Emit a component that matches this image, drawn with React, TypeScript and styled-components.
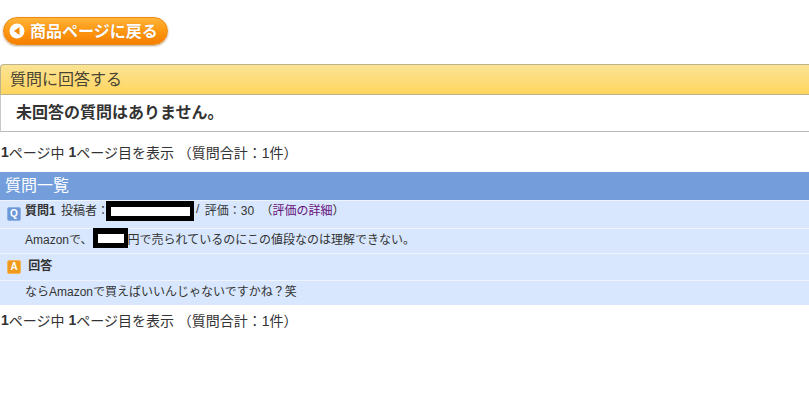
import React from "react";
import styled, { createGlobalStyle } from "styled-components";

const Global = createGlobalStyle`
  html, body { margin: 0; padding: 0; background: #fff; }
  body { font-family: "Liberation Sans", "Noto Sans CJK JP", sans-serif; color: #333; }
`;

const Page = styled.div`
  width: 809px;
  height: 420px;
  overflow: hidden;
  display: flex;
  flex-direction: column;
`;

const BackRow = styled.div`
  padding: 17px 0 0 3px;
  height: 64px;
  box-sizing: border-box;
  flex: none;
`;

const BackButton = styled.a`
  display: inline-flex;
  align-items: center;
  gap: 5px;
  box-sizing: border-box;
  width: 165px;
  height: 28px;
  padding: 0 0 2px 5px;
  border-radius: 14px;
  border: 1px solid #ee8a10;
  background: linear-gradient(#ffb43a 0%, #ff9a14 45%, #f57f00 100%);
  box-shadow: 0 1px 2px rgba(120, 70, 0, 0.5);
  color: #fff;
  font-size: 16px;
  font-weight: 700;
  white-space: nowrap;
  text-shadow: 0 0 1px rgba(150, 80, 0, 0.5);
`;

const BackIcon = styled.svg`
  width: 16px;
  height: 16px;
  flex: none;
  margin-top: 2px;
`;

const Panel = styled.section`
  box-sizing: border-box;
  height: 68px;
  flex: none;
`;

const PanelHead = styled.h2`
  box-sizing: border-box;
  height: 31px;
  margin: 0;
  padding: 0 0 4px 9px;
  display: flex;
  align-items: center;
  border: 1px solid #bdb38a;
  border-right: none;
  border-radius: 4px 0 0 0;
  background: linear-gradient(#fbe394 0%, #ffd55f 100%);
  color: #4a4433;
  font-size: 16px;
  font-weight: 400;
`;

const PanelBody = styled.div`
  box-sizing: border-box;
  height: 37px;
  padding: 0 0 4px 15px;
  display: flex;
  align-items: center;
  border-left: 1px solid #c8c8c8;
  border-bottom: 1px solid #bbb;
  font-size: 16px;
  font-weight: 700;
`;

const Pager = styled.p<{ $h: number; $lift?: number }>`
  margin: 0;
  flex: none;
  box-sizing: border-box;
  height: ${(p) => p.$h}px;
  display: flex;
  align-items: center;
  padding: 0 0 ${(p) => p.$lift ?? 0}px 1px;
  font-size: 14px;
  color: #333;
  white-space: pre;
  b { font-weight: 700; }
`;

const ListHead = styled.h3`
  box-sizing: border-box;
  flex: none;
  height: 28px;
  margin: 0;
  padding: 0 0 4px 5px;
  display: flex;
  align-items: center;
  background: #739edb;
  color: #fff;
  font-size: 16px;
  font-weight: 400;
`;

const Row = styled.div<{ $h: number; $indent?: boolean; $lift?: number }>`
  box-sizing: border-box;
  flex: none;
  height: ${(p) => p.$h}px;
  display: flex;
  align-items: center;
  padding-left: ${(p) => (p.$indent ? 25 : 7)}px;
  padding-bottom: ${(p) => p.$lift ?? 0}px;
  background: #d8e7fd;
  border-top: 1px solid #eef4fd;
  font-size: 12px;
  color: #333;
  white-space: pre;
`;

const Badge = styled.span<{ $bg: string; $edge: string; $drop?: number }>`
  flex: none;
  width: 14px;
  height: 14px;
  margin-right: 4px;
  margin-top: ${(p) => p.$drop ?? 0}px;
  box-sizing: border-box;
  border: 1px solid ${(p) => p.$edge};
  border-radius: 2px;
  background: ${(p) => p.$bg};
  color: #fff;
  font-size: 10px;
  font-weight: 700;
  line-height: 12px;
  text-align: center;
`;

const Strong = styled.strong`
  font-weight: 700;
  margin-right: 2px;
`;

const Redact = styled.span<{ $w: number; $h: number; $shift: number; $pull?: number }>`
  display: inline-block;
  box-sizing: border-box;
  width: ${(p) => p.$w}px;
  height: ${(p) => p.$h}px;
  margin-left: ${(p) => p.$pull ?? 0}px;
  background: #fff;
  border: solid #000;
  border-width: 6px 4px 5px 5px;
  position: relative;
  top: ${(p) => p.$shift}px;
  flex: none;
`;

const Gap = styled.span<{ $w: number }>`
  display: inline-block;
  width: ${(p) => p.$w}px;
`;

const Purple = styled.a`
  color: #660e7a;
`;

export default function App() {
  return (
    <Page>
      <Global />
      <BackRow>
        <BackButton>
          <BackIcon viewBox="0 0 16 16">
            <circle cx="8" cy="8" r="7.5" fill="#fff" />
            <path d="M10.5 4 L5 8 L10.5 12 Z" fill="#f58a06" />
          </BackIcon>
          商品ページに戻る
        </BackButton>
      </BackRow>
      <Panel>
        <PanelHead>質問に回答する</PanelHead>
        <PanelBody>未回答の質問はありません。</PanelBody>
      </Panel>
      <Pager $h={40}>
        <b>1</b>ページ中 <b>1</b>ページ目を表示 （質問合計：1件）
      </Pager>
      <ListHead>質問一覧</ListHead>
      <Row $h={28} $lift={11}>
        <Badge $bg="#6c97d8" $edge="#8fb2e6" $drop={9}>Q</Badge>
        <Strong>質問1</Strong> 投稿者：<Redact $w={88} $h={20} $shift={2} $pull={-3} /><Gap $w={2} />/<Gap $w={2} /> 評価：30<Gap $w={3} /> （<Purple>評価の詳細</Purple>）
      </Row>
      <Row $h={25} $indent $lift={6}>
        Amazonで、<Redact $w={35} $h={20} $shift={0} />円で売られているのにこの値段なのは理解できない。
      </Row>
      <Row $h={27} $lift={6}>
        <Badge $bg="#f09a1c" $edge="#f4b45a" $drop={6}>A</Badge>
        <Strong> 回答</Strong>
      </Row>
      <Row $h={25} $indent $lift={5}>ならAmazonで買えばいいんじゃないですかね？笑</Row>
      <Pager $h={33} $lift={3}>
        <b>1</b>ページ中 <b>1</b>ページ目を表示 （質問合計：1件）
      </Pager>
    </Page>
  );
}
